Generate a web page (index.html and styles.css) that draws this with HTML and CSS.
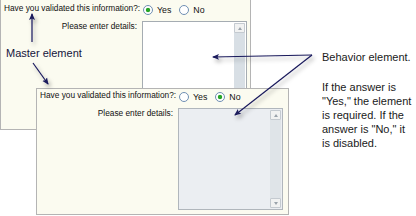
FILE: index.html
```html
<!DOCTYPE html>
<html>
<head>
<meta charset="utf-8">
<link rel="stylesheet" href="styles.css">
</head>
<body>
<div class="canvas">
  <div class="shots">
    <div class="panel panel-master">
      <div class="row row-q">
        <span class="label">Have you validated this information?:</span>
        <span class="radios"><span class="radio on"></span><span class="opt">Yes</span><span class="radio"></span><span class="opt">No</span></span>
      </div>
      <div class="row row-d">
        <span class="label">Please enter details:</span>
        <div class="memo memo-tall">
          <div class="scroll"><span class="btn up"></span><span class="track"></span></div>
        </div>
      </div>
    </div>
    <div class="note-master">Master element</div>
    <div class="panel panel-behavior">
      <div class="row row-q">
        <span class="label">Have you validated this information?:</span>
        <span class="radios"><span class="radio"></span><span class="opt">Yes</span><span class="radio on"></span><span class="opt">No</span></span>
      </div>
      <div class="row row-d">
        <span class="label">Please enter details:</span>
        <div class="memo memo-off">
          <div class="scroll"><span class="btn up"></span><span class="track"></span><span class="btn down"></span></div>
        </div>
      </div>
    </div>
  </div>
  <div class="notes">
    <p class="note-title">Behavior element.</p>
    <p class="note-body">If the answer is<br>"Yes," the element<br>is required. If the<br>answer is "No," it<br>is disabled.</p>
  </div>
  <svg class="arrows" width="416" height="216" viewBox="0 0 416 216">
    <defs>
      <filter id="sh" x="-30%" y="-30%" width="160%" height="160%">
        <feDropShadow dx="2" dy="3" stdDeviation="2" flood-color="#000" flood-opacity="0.35"/>
      </filter>
      <marker id="ah" markerWidth="7" markerHeight="7" refX="6" refY="3.5" orient="auto" markerUnits="userSpaceOnUse">
        <path d="M0,0.5 L7,3.5 L0,6.5 L1.5,3.5 z" fill="#1a1a5c"/>
      </marker>
    </defs>
    <g stroke="#1a1a5c" stroke-width="1.2" fill="none" filter="url(#sh)">
      <line x1="32" y1="42" x2="32" y2="14" marker-end="url(#ah)"/>
      <line x1="33" y1="63" x2="48" y2="84" marker-end="url(#ah)"/>
      <line x1="312" y1="55" x2="213" y2="57" marker-end="url(#ah)"/>
      <line x1="312" y1="55" x2="235" y2="115" marker-end="url(#ah)"/>
    </g>
  </svg>
</div>
</body>
</html>
```
FILE: styles.css
```css
html, body {
  margin: 0;
  padding: 0;
  background: #fff;
}
.canvas {
  position: relative;
  display: flex;
  width: 416px;
  height: 216px;
  overflow: hidden;
  background: #fff;
  font-family: "Liberation Sans", Arial, sans-serif;
}
.shots {
  position: relative;
  flex: none;
  width: 322px;
  height: 216px;
}
.panel {
  box-sizing: border-box;
  background: #fbfbf0;
  border: 1px solid #b4b4b4;
  padding: 0 0 0 3px;
  overflow: hidden;
  font-size: 8.3px;
  color: #111;
}
.panel-master {
  width: 251px;
  height: 130px;
  border-top: 0;
  padding-top: 2px;
}
.panel-behavior {
  position: absolute;
  left: 36px;
  top: 88px;
  width: 253px;
  height: 127px;
}
.row {
  display: flex;
  gap: 5px;
}
.label {
  flex: none;
  width: 133px;
  text-align: right;
  white-space: nowrap;
  line-height: 10px;
}
.row-q {
  height: 16px;
  align-items: center;
}
.row-q .label {
  align-self: flex-start;
  margin-top: 1px;
}
.row-d {
  margin-top: 3px;
  align-items: flex-start;
}
.radios {
  display: flex;
  align-items: center;
  margin-left: 1px;
  line-height: 10px;
  font-size: 8.8px;
}
.radio {
  box-sizing: border-box;
  width: 10px;
  height: 10px;
  border: 1px solid #6f8fb3;
  border-radius: 50%;
  background: #fff;
}
.radio.on {
  background: radial-gradient(circle, #27a527 0, #27a527 1.8px, #fff 2.6px);
}
.opt {
  margin-left: 4px;
  margin-right: 8px;
}
.memo {
  box-sizing: border-box;
  width: 105px;
  height: 102px;
  border: 1px solid #a5acb2;
  background: #fff;
  display: flex;
  justify-content: flex-end;
  padding: 1px;
}
.memo-tall {
  height: 112px;
}
.memo-off {
  background: #ebeef2;
  border-color: #b0b6bc;
}
.scroll {
  width: 11px;
  display: flex;
  flex-direction: column;
  background: #d8dfe5;
}
.memo-off .scroll {
  background: #dfe4e8;
}
.track {
  flex: 1;
}
.btn {
  box-sizing: border-box;
  height: 10px;
  background: #f1f2f2;
  border: 1px solid #c4cad0;
  border-radius: 1px;
  display: flex;
  align-items: center;
  justify-content: center;
}
.btn::after {
  content: "";
  width: 0;
  height: 0;
  border-left: 2.5px solid transparent;
  border-right: 2.5px solid transparent;
}
.btn.up::after {
  border-bottom: 3px solid #9aa3ab;
}
.btn.down::after {
  border-top: 3px solid #9aa3ab;
}
.note-master {
  position: absolute;
  left: 6px;
  top: 46px;
  font-size: 11px;
  line-height: 14px;
  color: #14143c;
}
.notes {
  flex: none;
  padding-top: 50px;
  font-size: 11px;
  line-height: 14px;
  color: #1a1a1a;
}
.notes p {
  margin: 0;
  white-space: nowrap;
}
.note-body {
  margin-top: 16px !important;
}
.arrows {
  position: absolute;
  left: 0;
  top: 0;
  pointer-events: none;
}
```
